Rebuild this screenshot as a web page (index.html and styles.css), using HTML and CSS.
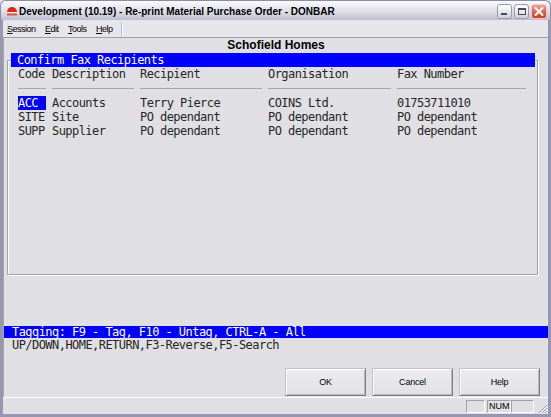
FILE: index.html
```html
<!DOCTYPE html>
<html>
<head>
<meta charset="utf-8">
<link rel="stylesheet" href="styles.css">
</head>
<body>
<div class="window">
  <div class="titlebar">
    <svg class="appicon" viewBox="0 0 12 12" width="12" height="12">
      <path d="M1 7 A5 5 0 0 1 11 7 Z" fill="#e02818"/>
      <rect x="1" y="7" width="10" height="1" fill="#f0f0f0"/>
      <rect x="1" y="8.5" width="10" height="2" fill="#e85040"/>
    </svg>
    <span class="title">Development (10.19) - Re-print Material Purchase Order - DONBAR</span>
    <div class="caps">
      <span class="cap"><svg viewBox="0 0 13 13" width="13" height="13"><rect x="3" y="8" width="6" height="2" fill="#4a4a5a"/></svg></span>
      <span class="cap"><svg viewBox="0 0 13 13" width="13" height="13"><rect x="3.5" y="3.5" width="7" height="6" fill="none" stroke="#4a4a5a"/><rect x="3" y="3" width="8" height="2" fill="#4a4a5a"/></svg></span>
      <span class="cap close"><svg viewBox="0 0 14 13" width="14" height="13"><path d="M3.5 3 L10.5 10 M10.5 3 L3.5 10" stroke="#fff" stroke-width="2" stroke-linecap="round"/></svg></span>
    </div>
  </div>
  <div class="body">
    <div class="menubar">
      <span class="menu"><u>S</u>ession</span>
      <span class="menu"><u>E</u>dit</span>
      <span class="menu"><u>T</u>ools</span>
      <span class="menu"><u>H</u>elp</span>
      <span class="menusep"></span>
    </div>
    <div class="client">
      <div class="company">Schofield Homes</div>
      <div class="group">
        <div class="legend">Confirm Fax Recipients</div>
        <div class="table">
          <div class="th">Code</div>
          <div class="th">Description</div>
          <div class="th">Recipient</div>
          <div class="th">Organisation</div>
          <div class="th">Fax Number</div>

          <div class="sel">ACC</div>
          <div>Accounts</div>
          <div>Terry Pierce</div>
          <div>COINS Ltd.</div>
          <div>01753711010</div>

          <div>SITE</div>
          <div>Site</div>
          <div>PO dependant</div>
          <div>PO dependant</div>
          <div>PO dependant</div>

          <div>SUPP</div>
          <div>Supplier</div>
          <div>PO dependant</div>
          <div>PO dependant</div>
          <div>PO dependant</div>
        </div>
      </div>
      <div class="tagbar">Tagging: F9 - Tag, F10 - Untag, CTRL-A - All</div>
      <div class="keys">UP/DOWN,HOME,RETURN,F3-Reverse,F5-Search</div>
      <div class="buttons">
        <button class="btn">OK</button>
        <button class="btn">Cancel</button>
        <button class="btn">Help</button>
      </div>
    </div>
    <div class="statusbar">
      <span class="pane p1"></span>
      <span class="pane p2">NUM</span>
      <span class="pane p3"></span>
      <svg class="grip" viewBox="0 0 12 12" width="12" height="12">
        <path d="M11 3 L3 11 M11 6 L6 11 M11 9 L9 11" stroke="#a0a0a8" stroke-width="1"/>
        <path d="M11 4 L4 11 M11 7 L7 11 M11 10 L10 11" stroke="#ffffff" stroke-width="1"/>
      </svg>
    </div>
  </div>
</div>
</body>
</html>
```
FILE: styles.css
```css
* { box-sizing: border-box; }
body { margin: 0; background: #e0dfe3; }

.window {
  width: 551px;
  height: 417px;
  display: flex;
  flex-direction: column;
  background: #e0dfe3;
  font-family: "Liberation Sans", Arial, sans-serif;
  overflow: hidden;
}

.titlebar {
  height: 20px;
  flex: none;
  display: flex;
  align-items: center;
  padding: 0 3px 0 5px;
  border: 1px solid #8c8ca8;
  border-bottom: 0;
  border-radius: 6px 6px 0 0;
  background: linear-gradient(#fbfbfd, #e8e8ef 35%, #d6d6e1 70%, #bcbccd);
}
.appicon { flex: none; margin-right: 1px; margin-top: 1px; }
.title {
  flex: 1;
  font-weight: bold;
  font-size: 10px;
  color: #000;
  white-space: nowrap;
  padding-top: 1px;
}
.caps { display: flex; gap: 2px; margin-top: 2px; }
.cap {
  width: 15px;
  height: 15px;
  display: flex;
  align-items: center;
  justify-content: center;
  border: 1px solid #9a9ab2;
  border-radius: 3px;
  background: linear-gradient(#ffffff, #e4e4ec 60%, #cfcfdb);
}
.cap.close {
  width: 16px;
  border-color: #f4c8c0;
  background: linear-gradient(#f2a494, #de5e4a 55%, #c9402c);
}

.body {
  flex: 1;
  display: flex;
  flex-direction: column;
  border-style: solid;
  border-width: 0 3px 3px 3px;
  border-color: #9696b0;
}

.menubar {
  height: 18px;
  flex: none;
  display: flex;
  align-items: center;
  padding-left: 4px;
  background: #e6e5eb;
  border-bottom: 1px solid #a0a09c;
  font-size: 9px;
  letter-spacing: -0.5px;
  color: #000;
}
.menu { margin-right: 9.5px; }
.menusep {
  width: 2px;
  height: 14px;
  border-left: 1px solid #c0c0c8;
  border-right: 1px solid #ffffff;
  margin-left: -1px;
}

.client {
  flex: 1;
  display: flex;
  flex-direction: column;
  border-left: 1px solid #a8a898;
}

.company {
  height: 15px;
  flex: none;
  text-align: center;
  font-weight: bold;
  font-size: 12px;
  line-height: 15px;
  color: #000;
}

.group {
  flex: none;
  height: 215px;
  margin: 7px 10px 0 3px;
  border: 1px solid #a4a4a8;
  box-shadow: 1px 1px 0 #ffffff, inset 1px 1px 0 #ffffff;
}
.legend {
  height: 14px;
  margin: -8px 2px 0 3px;
  padding-left: 6px;
  background: #0000ff;
  color: #ffffff;
  font: 12px/14px "DejaVu Sans Mono", monospace;
  letter-spacing: -0.55px;
  white-space: nowrap;
}
.table {
  display: grid;
  grid-template-columns: 28px 82px 122px 123px 129px;
  column-gap: 6px;
  padding-left: 10px;
  font: 12px/14px "DejaVu Sans Mono", monospace;
  letter-spacing: -0.55px;
  color: #262626;
  white-space: nowrap;
}
.th {
  padding-bottom: 7px;
  border-bottom: 1px solid #a6a6aa;
  margin-bottom: 7px;
}
.sel { background: #0000ff; color: #ffffff; }

.tagbar {
  flex: none;
  height: 12px;
  margin-top: 51px;
  padding-left: 8px;
  background: #0000ff;
  color: #ffffff;
  font: 12px/12px "DejaVu Sans Mono", monospace;
  letter-spacing: -0.55px;
  white-space: nowrap;
  overflow: hidden;
}
.keys {
  flex: none;
  height: 14px;
  padding-left: 8px;
  color: #262626;
  font: 12px/14px "DejaVu Sans Mono", monospace;
  letter-spacing: -0.55px;
  white-space: nowrap;
}

.buttons {
  flex: none;
  display: flex;
  justify-content: flex-end;
  gap: 6px;
  margin-top: 16px;
  padding-right: 8px;
}
.btn {
  width: 81px;
  height: 28px;
  padding: 0;
  font-family: "Liberation Sans", Arial, sans-serif;
  font-size: 9px;
  letter-spacing: -0.2px;
  color: #000;
  background: linear-gradient(#ececf0, #e2e2e6);
  border: 1px solid;
  border-color: #c4c4c8 #7e7e84 #7e7e84 #c4c4c8;
  box-shadow: inset 1px 1px 0 #ffffff, inset -1px -1px 0 #b8b8bc;
}

.statusbar {
  height: 17px;
  flex: none;
  display: flex;
  align-items: flex-start;
  justify-content: flex-end;
  border-top: 1px solid #ffffff;
  padding-top: 2px;
}
.pane {
  height: 13px;
  border: 1px solid;
  border-color: #a0a0a4 #ffffff #ffffff #a0a0a4;
  font-size: 9px;
  line-height: 11px;
  color: #000;
  overflow: hidden;
  white-space: nowrap;
  padding-left: 1px;
}
.p1 { width: 19px; margin-right: 2px; }
.p2 { width: 24px; margin-right: 0; }
.p3 { width: 23px; }
.grip { margin: 2px 0 0 2px; }
```
